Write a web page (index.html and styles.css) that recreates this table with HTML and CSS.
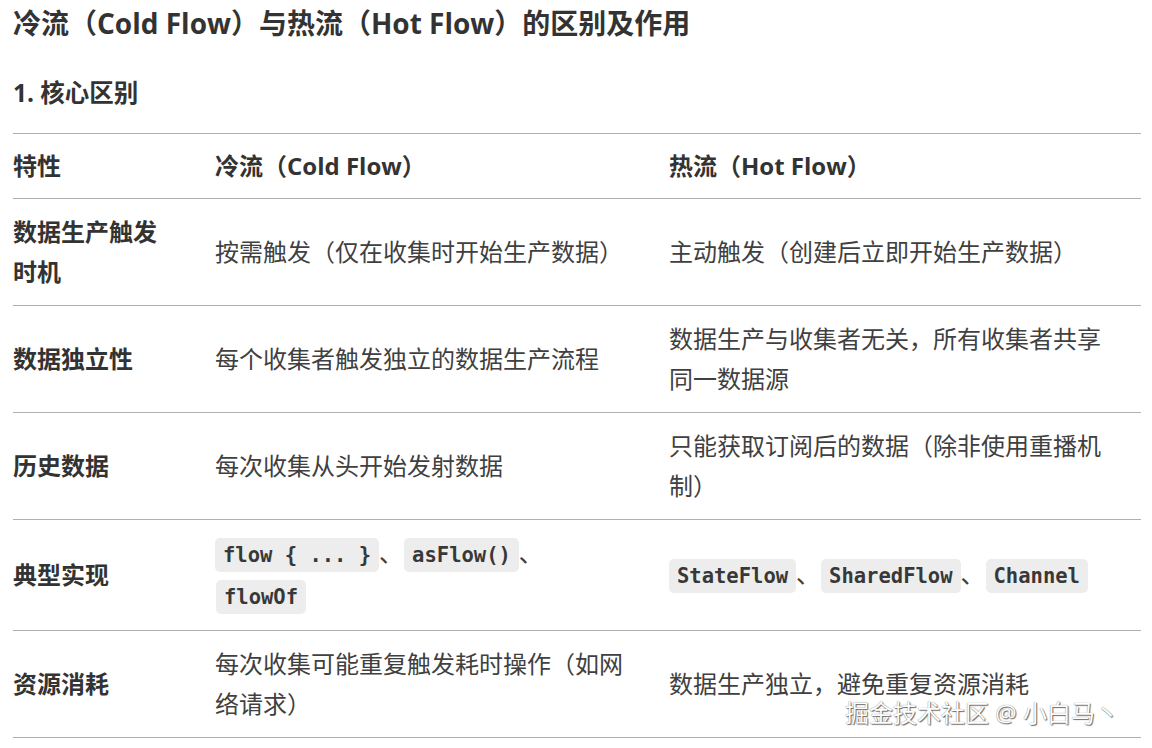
FILE: index.html
```html
<!DOCTYPE html>
<html lang="zh-CN">
<head>
<meta charset="utf-8">
<title>冷流与热流</title>
<link rel="stylesheet" href="styles.css">
</head>
<body>
<div class="page">
  <h1 class="title">冷流（Cold Flow）与热流（Hot Flow）的区别及作用</h1>
  <h2 class="section">1. 核心区别</h2>
  <table class="cmp">
    <colgroup>
      <col class="w1"><col class="w2"><col class="w3">
    </colgroup>
    <thead>
      <tr>
        <th class="c1">特性</th>
        <th class="c2">冷流（Cold Flow）</th>
        <th class="c3">热流（Hot Flow）</th>
      </tr>
    </thead>
    <tbody>
      <tr>
        <td class="c1 key">数据生产触发时机</td>
        <td class="c2">按需触发（仅在收集时开始生产数据）</td>
        <td class="c3">主动触发（创建后立即开始生产数据）</td>
      </tr>
      <tr>
        <td class="c1 key">数据独立性</td>
        <td class="c2">每个收集者触发独立的数据生产流程</td>
        <td class="c3">数据生产与收集者无关，所有收集者共享同一数据源</td>
      </tr>
      <tr>
        <td class="c1 key">历史数据</td>
        <td class="c2">每次收集从头开始发射数据</td>
        <td class="c3">只能获取订阅后的数据（除非使用重播机制）</td>
      </tr>
      <tr>
        <td class="c1 key">典型实现</td>
        <td class="c2"><code class="chip">flow { ... }</code>、<code class="chip sep">asFlow()</code>、<code class="chip sep">flowOf</code></td>
        <td class="c3"><code class="chip">StateFlow</code>、<code class="chip sep">SharedFlow</code>、<code class="chip sep">Channel</code></td>
      </tr>
      <tr>
        <td class="c1 key">资源消耗</td>
        <td class="c2">每次收集可能重复触发耗时操作（如网络请求）</td>
        <td class="c3">数据生产独立，避免重复资源消耗</td>
      </tr>
    </tbody>
  </table>
  <div class="watermark">掘金技术社区 @ 小白马丶</div>
</div>
</body>
</html>
```

FILE: styles.css
```css
html, body {
  margin: 0;
  padding: 0;
  background: #ffffff;
}

body {
  font-family: "Open Sans", "Noto Sans CJK SC", sans-serif;
  color: #3a3a3a;
}

.page {
  position: relative;
  width: 1152px;
  height: 748px;
  box-sizing: border-box;
  padding: 3px 11px 0 13px;
  overflow: hidden;
}

.title {
  margin: 0;
  font-size: 28px;
  line-height: 40px;
  font-weight: 700;
  color: #333333;
}

.section {
  margin: 30px 0 0 0;
  font-size: 24.5px;
  line-height: 40px;
  font-weight: 700;
  color: #333333;
}

.cmp {
  margin-top: 20px;
  width: 1128px;
  border-collapse: collapse;
  table-layout: fixed;
  font-size: 24px;
  line-height: 40px;
}

.w1 { width: 202px; }
.w2 { width: 454px; }
.w3 { width: 472px; }

.cmp th,
.cmp td {
  text-align: left;
  vertical-align: middle;
  border-top: 1px solid #b0b0b0;
  border-bottom: 1px solid #b0b0b0;
  padding: 13px 0;
}

.cmp th {
  padding: 12px 0;
  font-weight: 700;
  color: #333333;
}

.cmp .c1 { padding-right: 47px; }
.cmp .c2 { padding-right: 40px; }
.cmp .c3 { padding-right: 28px; }

.cmp td {
  color: #404040;
}

.cmp td.key {
  font-weight: 700;
  color: #333333;
}

.chip {
  font-family: "DejaVu Sans Mono", "Liberation Mono", monospace;
  font-weight: 700;
  font-size: 20.5px;
  color: #383838;
  background: #ededed;
  border-radius: 5px;
  padding: 5px 8px;
}

.chip.sep {
  margin-left: 1px;
}

.watermark {
  position: absolute;
  left: 845px;
  top: 697px;
  font-size: 24px;
  line-height: 32px;
  color: #ffffff;
  white-space: nowrap;
  text-shadow: 1px 1px 1px rgba(0, 0, 0, 0.55), 0 0 1px rgba(0, 0, 0, 0.6);
}
```
